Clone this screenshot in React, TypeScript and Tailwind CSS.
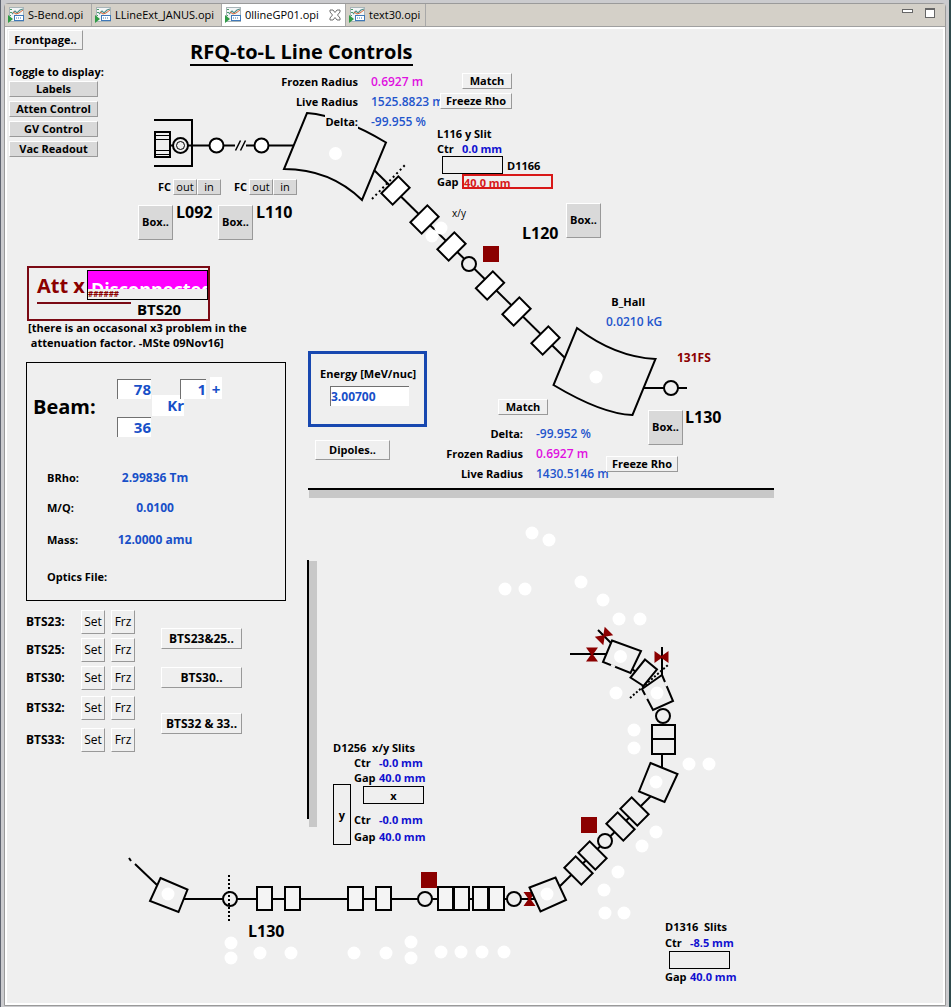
import React from 'react';
import clsx from 'clsx';

const INK = '#000';
const BG = '#efefef';

type Point = [number, number];

function ChartIcon() {
  return (
    <svg width="16" height="16" viewBox="0 0 16 16" className="shrink-0" aria-hidden="true">
      <rect x="1.500" y="0.500" width="14" height="14" fill="#f2f5f6" stroke="#a9b4b8" />
      <path d="M2 2.500h2M2 5.500h2M2 8.500h1" stroke="#4c9a6a" strokeWidth="1.200" />
      <path d="M4 7l3-3 2 2 3-3 3-1" fill="none" stroke="#4f8f8a" strokeWidth="1.200" />
      <path d="M5 5l3 2 3-1 4-3" fill="none" stroke="#d9663a" />
      <rect x="6.500" y="8.500" width="9" height="5" fill="#fff" stroke="#3f78b8" />
      <path d="M8 11h6" stroke="#3f78b8" strokeDasharray="1 1" />
      <path d="M0 8l5 4-5 4z" fill="#2f9a45" />
    </svg>
  );
}

function Tab({ label, active, className }: { label: string; active?: boolean; className?: string }) {
  return (
    <button
      type="button"
      className={clsx(
        'flex h-[22px] items-center gap-1 whitespace-nowrap border-r border-[#a8a8a8] pl-[3px] text-[11px]',
        active ? 'bg-white' : 'bg-[#d4d0c8]',
        className,
      )}
    >
      <ChartIcon />
      <span>{label}</span>
      {active && (
        <svg width="12" height="12" viewBox="0 0 12 12" className="ml-1.5" aria-hidden="true">
          <path
            d="M1 1h3l2 2.500L8 1h3v2L8.500 6 11 9v2H8L6 8.500 4 11H1V9l2.500-3L1 3z"
            fill="#fff"
            stroke="#6f6f6f"
          />
        </svg>
      )}
    </button>
  );
}

function Btn({ children, className }: { children: React.ReactNode; className?: string }) {
  return (
    <button
      type="button"
      className={clsx(
        'flex items-center justify-center whitespace-nowrap border border-b-[#999] border-l-white border-r-[#999] border-t-white',
        className,
      )}
    >
      {children}
    </button>
  );
}

function BoxBtn() {
  return <Btn className="size-[35px] bg-[#d9d9d9] text-[11px]">Box..</Btn>;
}

function Polygon({ points, fill = BG }: { points: Point[]; fill?: string }) {
  return <polygon points={points.map((p) => p.join(',')).join(' ')} fill={fill} stroke={INK} strokeWidth="2" />;
}

function Quad({ x, y, angle, fill = BG }: { x: number; y: number; angle: number; fill?: string }) {
  return (
    <rect
      x="-12"
      y="-8"
      width="24"
      height="16"
      fill={fill}
      stroke={INK}
      strokeWidth="2"
      transform={`translate(${x} ${y}) rotate(${angle})`}
    />
  );
}

function Valve({ x, y, angle = 0 }: { x: number; y: number; angle?: number }) {
  return (
    <path d="M-6-7H6L1 0 6 7H-6L-1 0z" fill="#8b0000" transform={`translate(${x} ${y}) rotate(${angle})`} />
  );
}

function Ring({ x, y, fill = BG }: { x: number; y: number; fill?: string }) {
  return <circle cx={x} cy={y} r="7" fill={fill} stroke={INK} strokeWidth="2" />;
}

const LAMPS: Point[] = [
  [441, 228], [432, 236],
  [532, 533], [549, 540], [505, 589], [525, 589], [581, 582], [603, 600], [619, 619], [640, 619],
  [616, 693], [634, 730], [634, 748], [689, 764], [709, 764],
  [656, 832], [642, 846], [618, 872], [604, 890], [605, 913], [624, 913],
  [411, 942], [411, 958], [441, 952], [461, 952], [482, 952], [504, 952],
  [231, 943], [231, 958], [260, 953], [291, 953], [354, 953], [386, 953],
];

const MAGNET_LAMPS: Point[] = [
  [335.5, 153.5], [596, 377], [620.5, 656.5], [657, 693], [656, 782], [547, 894], [168, 894],
];

const TRANSFER_QUADS: Point[] = [
  [395.5, 190.5], [424.5, 219.5], [451.5, 246.5], [490, 285.5], [516.5, 311.5], [545.5, 340.5],
];
const ARC_QUADS: Point[] = [[634.5, 811.5], [620.5, 826.5], [592.5, 855.5], [578.5, 870.5]];
const LINE_QUADS = [257, 285, 348, 376, 438, 454, 473, 489];

function Beamline() {
  return (
    <svg className="pointer-events-none absolute inset-0 h-full w-full" aria-hidden="true">
      <g transform="translate(-7 -29)">
        <g fill="none" stroke={INK} strokeWidth="2">
          <path d="M154 120h38v46h-38" />
          <path d="M154 145.500H294" />
        </g>
        <rect x="155" y="132" width="15" height="25" fill={BG} stroke={INK} strokeWidth="2" />
        <path d="M155 135.500h15M155 139.500h15M155 150.500h15M155 154.500h15" stroke={INK} />
        <circle cx="180.500" cy="145.500" r="7.500" fill={BG} stroke={INK} strokeWidth="2" />
        <circle cx="180.500" cy="145.500" r="4" fill="none" stroke={INK} />
        <Ring x={216.5} y={145.5} fill="#fff" />
        <rect x="235" y="141" width="11" height="9" fill={BG} />
        <path d="M235.500 150.500l5-10M240.500 150.500l5-10" stroke={INK} strokeWidth="1.500" />
        <Ring x={261.5} y={145.5} fill="#fff" />
        <path d="M307 113Q342 116 386 142.500L362 200Q330 169 284 169Z" fill={BG} stroke={INK} strokeWidth="2" />

        <path d="M374 170L565 358" stroke={INK} strokeWidth="2" />
        <path d="M372 199L405 165" stroke={INK} strokeWidth="2" strokeDasharray="2 3" />
        {TRANSFER_QUADS.map(([x, y]) => (
          <Quad key={x} x={x} y={y} angle={-45} fill="#fff" />
        ))}
        <Ring x={469} y={264} />
        <rect x="483" y="246" width="16" height="16" fill="#8b0000" />
        <path
          d="M577 328Q615 357 655.500 359L632.500 415Q602 414 553.500 385Z"
          fill={BG}
          stroke={INK}
          strokeWidth="2"
        />
        <path d="M643 388H687" stroke={INK} strokeWidth="2" />
        <Ring x={671} y={388} />

        <path d="M308 489H774" stroke={INK} strokeWidth="2" />
        <rect x="309" y="490" width="465" height="8" fill="#c8c8c8" />
        <path d="M308 560V819" stroke={INK} strokeWidth="2" />
        <rect x="309" y="561" width="8" height="266" fill="#c8c8c8" />

        <g fill="none" stroke={INK} strokeWidth="2">
          <path d="M570 654H606M598 630L611 643M631 668L648 682M662 647V676M662 754V767" />
          <path d="M129 858l2 3M135 864L157 885" />
          <path d="M184 899H545M550 896L652 795" />
        </g>
        <Valve x={592} y={654.5} />
        <Valve x={604} y={636} angle={45} />
        <Valve x={661.5} y={657} angle={90} />
        <Polygon points={[[612, 640.5], [641, 651], [630.5, 673], [603, 662]]} />
        <Polygon points={[[662, 675], [673, 701], [653, 710], [642, 689]]} />
        <path d="M611 665l4 2M645 695l2 4M665 682l2 4" stroke={BG} strokeWidth="3" />
        <Polygon points={[[645, 659.5], [657, 669.5], [643.5, 686], [630.5, 677.5]]} />
        <path d="M630 698L668 665" stroke={INK} strokeWidth="2" strokeDasharray="2 2" />
        <Ring x={663} y={716} />
        <path d="M652 725h23v29h-23zM652 739h23" fill={BG} stroke={INK} strokeWidth="2" />
        <Polygon points={[[650.5, 763], [677.5, 774], [664.5, 802], [639, 791.5]]} />
        {ARC_QUADS.map(([x, y]) => (
          <Quad key={x} x={x} y={y} angle={45} />
        ))}
        <Ring x={605} y={841} />
        <rect x="581" y="817" width="16" height="16" fill="#8b0000" />
        <Valve x={529.5} y={899} />
        <Polygon points={[[529.5, 887.5], [555.5, 877.5], [566, 900], [540.5, 911.5]]} />

        {LINE_QUADS.map((x) => (
          <rect key={x} x={x} y="887" width="15" height="23" fill="#f4f4f4" stroke={INK} strokeWidth="2" />
        ))}
        <Ring x={514} y={899} />
        <Ring x={425} y={899} />
        <Ring x={230} y={899} />
        <path d="M229 875V921" stroke={INK} strokeWidth="2" strokeDasharray="2 2" />
        <rect x="421" y="872" width="16" height="16" fill="#8b0000" />
        <Polygon points={[[160.5, 878], [187.5, 889.5], [178.5, 912], [150, 901]]} />

        {[...LAMPS, ...MAGNET_LAMPS].map(([x, y]) => (
          <circle key={`${x}-${y}`} cx={x} cy={y} r="6.500" fill="#fff" />
        ))}
      </g>
    </svg>
  );
}

type Readout = { label: string; value: string; tone: string };

function Readouts({ rows, className }: { rows: Readout[]; className?: string }) {
  return (
    <dl className={clsx('absolute flex w-[172px] flex-col gap-1 leading-4', className)}>
      {rows.map((r) => (
        <div key={r.label} className="flex h-4 items-center gap-[13px] whitespace-nowrap">
          <dt className="flex w-[78px] justify-end">
            <span className="bg-[#efefef]">{r.label}</span>
          </dt>
          <dd className={clsx('text-xs font-semibold', r.tone)}>{r.value}</dd>
        </div>
      ))}
    </dl>
  );
}

function Measure({ label, value }: { label: string; value: string }) {
  return (
    <div className="flex whitespace-nowrap">
      <span className="w-[25px]">{label}</span>
      <span className="text-[#1010d0]">{value}</span>
    </div>
  );
}

function Cup() {
  return (
    <div className="flex items-center">
      <span className="w-[15px]">FC</span>
      <Btn className="h-4 w-6 bg-[#d9d9d9] font-normal">out</Btn>
      <Btn className="h-4 w-6 bg-[#d9d9d9] font-normal">in</Btn>
    </div>
  );
}

const ENTRY = 'border-l border-t border-[#707070] bg-white';

function SidePanel() {
  const rows = [
    { name: 'BTS23:', gap: '' },
    { name: 'BTS25:', gap: 'mt-1' },
    { name: 'BTS30:', gap: 'mt-1' },
    { name: 'BTS32:', gap: 'mt-1.5' },
    { name: 'BTS33:', gap: 'mt-2' },
  ];
  return (
    <aside className="flex w-[280px] flex-col items-start">
      <Btn className="ml-px mt-px h-5 w-[75px]">Frontpage..</Btn>
      <p className="ml-0.5 mt-3.5 leading-4">Toggle to display:</p>
      <div className="ml-0.5 mt-px flex w-[89px] flex-col gap-1">
        {['Labels', 'Atten Control', 'GV Control', 'Vac Readout'].map((t) => (
          <Btn key={t} className="h-4 bg-[#d9d9d9]">{t}</Btn>
        ))}
      </div>

      <section className="ml-5 mt-[109px] flex h-[55px] w-[183px] border-2 border-[#7b0a14] pt-0.5">
        <div className="flex w-[58px] flex-col pl-2">
          <span className="flex h-8 items-center whitespace-nowrap text-xl text-[#8b0000]">Att x</span>
          <span className="h-0.5 w-[94px] bg-[#7b0a14]" />
        </div>
        <div className="flex w-[121px] flex-col">
          <div className="h-[30px] overflow-hidden border border-black">
            <div className="h-[18px] overflow-hidden bg-[#ff00ff] pl-[3px] pt-1.5 text-lg leading-6 text-white">
              Disconnected
            </div>
            <div className="text-[8px] leading-[10px] text-[#8b0000]">######</div>
          </div>
          <span className="pl-[50px] text-[15px] leading-[18px]">BTS20</span>
        </div>
      </section>
      <p className="-mt-px ml-[21px] whitespace-pre leading-[15px]">
        {'[there is an occasonal x3 problem in the\n attenuation factor. -MSte 09Nov16]'}
      </p>

      <section className="ml-[19px] mt-3 h-[239px] w-[260px] border border-black">
        <div className="flex h-[75px] pl-1.5 pt-4 text-[15px] text-[#1850c8]">
          <h2 className="mt-3.5 w-[84px] text-xl leading-7 text-black">Beam:</h2>
          <div className="flex flex-col gap-[18px]">
            <input aria-label="Mass number" defaultValue="78" className={clsx('h-5 w-[34px] text-right', ENTRY)} />
            <input aria-label="Atomic number" defaultValue="36" className={clsx('h-5 w-[34px] text-right', ENTRY)} />
          </div>
          <output className="-mr-1 ml-px mt-4 h-[21px] w-8 bg-white text-right leading-[21px]">Kr</output>
          <input aria-label="Charge" defaultValue="1" className={clsx('h-5 w-[26px] text-right', ENTRY)} />
          <span className="-mt-0.5 ml-1 h-[22px] w-3 bg-white text-center leading-6">+</span>
        </div>
        <dl className="mt-[25px] pl-5">
          {[
            ['BRho:', '2.99836 Tm', 'h-[30px]'],
            ['M/Q:', '0.0100', 'h-[30px]'],
            ['Mass:', '12.0000 amu', 'h-[34px]'],
            ['Optics File:', '', 'h-10'],
          ].map(([k, v, h]) => (
            <div key={k} className={clsx('flex items-center', h)}>
              <dt className="w-[68px] whitespace-nowrap">{k}</dt>
              <dd className="w-20 whitespace-nowrap text-center text-xs text-[#1850c8]">{v}</dd>
            </div>
          ))}
        </dl>
      </section>

      <div className="ml-[19px] mt-[9px] flex text-xs">
        <div className="flex flex-col">
          {rows.map((r) => (
            <div key={r.name} className={clsx('flex items-center', r.gap)}>
              <span className="w-[55px]">{r.name}</span>
              <Btn className="mr-1.5 h-6 w-6 font-normal">Set</Btn>
              <Btn className="h-6 w-6 font-normal">Frz</Btn>
            </div>
          ))}
        </div>
        <div className="ml-[26px] flex w-[81px] flex-col pt-[18px]">
          <Btn className="h-[21px]">BTS23&amp;25..</Btn>
          <Btn className="mt-[18px] h-[21px]">BTS30..</Btn>
          <Btn className="mt-[25px] h-[21px]">BTS32 &amp; 33..</Btn>
        </div>
      </div>
    </aside>
  );
}

const BLUE = 'text-[#1f55cc]';
const PINK = 'text-[#e010e0]';

function Canvas() {
  return (
    <main className="relative flex-1 overflow-hidden border-2 border-white bg-[#efefef] text-[11px] font-bold text-black">
      <Beamline />
      <SidePanel />

      <h1 className="absolute left-[183px] top-2.5 whitespace-nowrap border-b-2 border-black text-xl leading-[25px]">
        RFQ-to-L Line Controls
      </h1>

      <Readouts
        className="left-[273px] top-[45px]"
        rows={[
          { label: 'Frozen Radius', value: '0.6927 m', tone: PINK },
          { label: 'Live Radius', value: '1525.8823 m', tone: BLUE },
          { label: 'Delta:', value: '-99.955 %', tone: BLUE },
        ]}
      />
      <div className="absolute left-[433px] top-11 flex w-[72px] flex-col items-end gap-1">
        <Btn className="h-4 w-[50px] bg-[#efefef]">Match</Btn>
        <Btn className="h-4 w-full bg-[#efefef]">Freeze Rho</Btn>
      </div>

      <div className="absolute left-[151px] top-[150px] flex gap-[13px]">
        <Cup />
        <Cup />
      </div>
      <div className="absolute left-[131px] top-44 flex gap-[3px] text-base">
        <BoxBtn />
        <span className="-mt-[5px] w-[39px]">L092</span>
        <BoxBtn />
        <span className="-mt-[5px]">L110</span>
      </div>

      <div className="absolute left-[430px] top-[97px] leading-[15px]">
        <div>L116 y Slit</div>
        <Measure label="Ctr" value="0.0 mm" />
        <div className="flex items-center gap-1 pl-[5px]">
          <span className="h-[18px] w-[61px] border border-black" />
          <span>D1166</span>
        </div>
        <div className="flex items-center">
          <span className="w-[25px]">Gap</span>
          <span className="h-[15px] w-[91px] overflow-hidden border-2 border-[#d81818] text-[11px] leading-[14px] text-[#d81818]">
            40.0 mm
          </span>
        </div>
      </div>

      <span className="absolute left-[445px] top-[177px] text-[10px] font-normal leading-[14px]">x/y</span>
      <div className="absolute left-[515px] top-[174px] flex gap-1">
        <span className="mt-5 w-10 text-base leading-5">L120</span>
        <BoxBtn />
      </div>

      <div className="absolute left-[599px] top-[265px] flex flex-col items-center gap-1 leading-4">
        <span className="mr-3">B_Hall</span>
        <span className={clsx('text-xs font-semibold leading-4', BLUE)}>0.0210 kG</span>
      </div>
      <span className="absolute left-[670px] top-[321px] text-xs leading-4 text-[#8b0000]">131FS</span>
      <div className="absolute left-[641px] top-[381px] flex gap-0.5">
        <BoxBtn />
        <span className="text-base leading-[14px]">L130</span>
      </div>

      <section className="absolute left-[301px] top-[322px] h-[76px] w-[119px] border-[3px] border-[#1848b0] pl-[9px] pt-3">
        <label htmlFor="energy" className="block whitespace-nowrap leading-4">Energy [MeV/nuc]</label>
        <input
          id="energy"
          defaultValue="3.00700"
          className={clsx('ml-2.5 mt-1 block h-5 w-[79px] text-xs text-[#1850c8]', ENTRY)}
        />
      </section>
      <Btn className="absolute left-[308px] top-[411px] h-5 w-[75px]">Dipoles..</Btn>

      <Btn className="absolute left-[491px] top-[370px] h-4 w-[50px]">Match</Btn>
      <Readouts
        className="left-[438px] top-[397px]"
        rows={[
          { label: 'Delta:', value: '-99.952 %', tone: BLUE },
          { label: 'Frozen Radius', value: '0.6927 m', tone: PINK },
          { label: 'Live Radius', value: '1430.5146 m', tone: BLUE },
        ]}
      />
      <Btn className="absolute left-[599px] top-[427px] h-4 w-[72px]">Freeze Rho</Btn>

      <section className="absolute left-[326px] top-[711px] leading-[15px]">
        <div className="whitespace-pre">D1256  x/y Slits</div>
        <div className="flex gap-[3px]">
          <span className="mt-[29px] flex h-[61px] w-[18px] items-center justify-center border border-black">y</span>
          <div>
            <Measure label="Ctr" value="-0.0 mm" />
            <Measure label="Gap" value="40.0 mm" />
            <div className="mb-2 ml-[9px] mt-px flex h-[18px] w-[61px] items-center justify-center border border-black">
              x
            </div>
            <Measure label="Ctr" value="-0.0 mm" />
            <div className="mt-0.5">
              <Measure label="Gap" value="40.0 mm" />
            </div>
          </div>
        </div>
      </section>

      <span className="absolute left-[241px] top-[892px] text-base leading-5">L130</span>

      <section className="absolute left-[658px] top-[890px] leading-4">
        <div className="whitespace-pre">D1316  Slits</div>
        <Measure label="Ctr" value="-8.5 mm" />
        <div className="ml-1 h-[18px] w-[61px] border border-black" />
        <Measure label="Gap" value="40.0 mm" />
      </section>
    </main>
  );
}

export default function App() {
  return (
    <div className="flex min-h-screen flex-col border-l border-r-2 border-l-[#5f6470] border-r-[#2f4a4c] bg-[#cbcbce] px-[3px] pb-px pt-[3px] font-['Open_Sans','Noto_Sans',sans-serif]">
      <div className="flex flex-1 flex-col rounded-t-sm border border-[#9a9a9a]">
        <header className="flex h-[23px] items-start justify-between border-b border-[#a0a0a0] bg-[#d4d0c8]">
          <nav className="flex">
            <Tab label="S-Bend.opi" className="w-[87px]" />
            <Tab label="LLineExt_JANUS.opi" className="w-[130px]" />
            <Tab label="0llineGP01.opi" className="w-[124px]" active />
            <Tab label="text30.opi" className="w-20" />
          </nav>
          <div className="flex items-start gap-3 pr-2.5 pt-1">
            <button type="button" aria-label="Minimize" className="mt-px h-1 w-[11px] border border-[#666] bg-white" />
            <button type="button" aria-label="Maximize" className="h-2.5 w-2.5 border border-t-2 border-[#666] bg-white" />
          </div>
        </header>
        <Canvas />
      </div>
    </div>
  );
}
